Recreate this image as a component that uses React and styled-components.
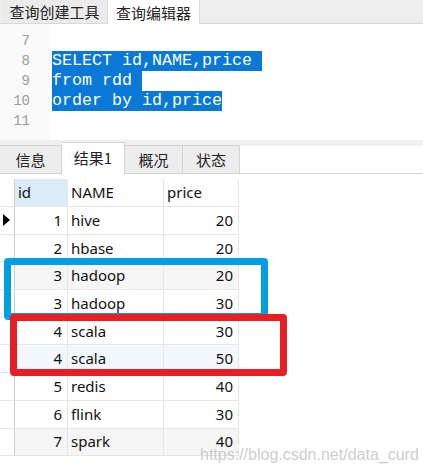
import React from "react";
import styled, { createGlobalStyle } from "styled-components";

const GlobalStyle = createGlobalStyle`
  html, body { margin: 0; padding: 0; background: #ffffff; }
  body { overflow: hidden; font-family: "Noto Sans", "Noto Sans CJK SC", sans-serif; }
`;

const Page = styled.div`
  position: relative;
  width: 423px;
  height: 475px;
  overflow: hidden;
  background: #ffffff;
`;

const TopTabBar = styled.div`
  display: flex;
  height: 23px;
  background: #eeeeee;
  border-bottom: 1px solid #d9d9d9;
  padding-left: 2px;
`;

const TopTab = styled.div`
  display: flex;
  align-items: center;
  justify-content: center;
  width: ${(p) => p.$w}px;
  height: ${(p) => (p.$active ? 24 : 23)}px;
  box-sizing: border-box;
  background: ${(p) => (p.$active ? "#ffffff" : "#ebebeb")};
  border-right: 1px solid #d9d9d9;
  font-family: "Noto Sans CJK SC", sans-serif;
  font-size: 15px;
  color: #222;
  line-height: 1;
`;

const Editor = styled.div`
  display: flex;
  height: 116px;
`;

const Gutter = styled.div`
  width: 50px;
  background: #fafafa;
  padding-top: 7px;
  box-sizing: border-box;
`;

const LineNo = styled.div`
  height: 20px;
  line-height: 20px;
  text-align: right;
  padding-right: 20px;
  font-family: "Liberation Mono", monospace;
  font-size: 14px;
  color: #9a9a9a;
`;

const Code = styled.div`
  flex: 1;
  padding-top: 7px;
  padding-left: 2px;
`;

const CodeLine = styled.div`
  height: 20px;
  line-height: 20px;
  font-family: "Liberation Mono", monospace;
  font-size: 16.67px;
  white-space: pre;
`;

const Sel = styled.span`
  display: inline-block;
  height: 20px;
  background: #0a78d7;
  color: #ffffff;
`;

const TabRow = styled.div`
  display: flex;
  align-items: flex-end;
  height: 34px;
  box-sizing: border-box;
  background: linear-gradient(#f0f0f0 0 6px, #ffffff 6px);
  border-bottom: 1px solid #d4d4d4;
`;

const ResTab = styled.div`
  display: flex;
  align-items: center;
  justify-content: center;
  width: ${(p) => p.$w}px;
  height: ${(p) => (p.$active ? 32 : 28)}px;
  margin-bottom: ${(p) => (p.$active ? -1 : 0)}px;
  box-sizing: border-box;
  background: ${(p) => (p.$active ? "#ffffff" : "#ededed")};
  border-top: 1px solid #d4d4d4;
  border-right: 1px solid #d4d4d4;
  font-family: "Noto Sans CJK SC", sans-serif;
  font-size: 15px;
  color: #222;
  line-height: 1;
  padding-bottom: ${(p) => (p.$active ? 2 : 0)}px;
`;

const GridWrap = styled.div`
  padding-top: 5px;
`;

const Grid = styled.div`
  display: grid;
  grid-template-columns: 15px 53px 96px 75px;
  grid-template-rows: 28px repeat(9, 27.7px);
`;

const Cell = styled.div`
  display: flex;
  align-items: center;
  box-sizing: border-box;
  border-right: 1px solid ${(p) => (p.$ind ? "#cfcfcf" : "#e6e6e6")};
  border-bottom: 1px solid #e6e6e6;
  background: ${(p) => p.$bg || "#ffffff"};
  justify-content: ${(p) => (p.$right ? "flex-end" : "flex-start")};
  padding: ${(p) => (p.$ind ? "0 0 0 3px" : p.$right ? "0 5px 0 0" : "0 0 0 3px")};
  font-family: "Noto Sans", sans-serif;
  font-size: 15px;
  color: #111;
  line-height: 1;
`;

const Arrow = styled.span`
  width: 0;
  height: 0;
  border-top: 6px solid transparent;
  border-bottom: 6px solid transparent;
  border-left: 7px solid #000;
`;

const Frame = styled.div`
  position: absolute;
  left: ${(p) => p.$x}px;
  top: ${(p) => p.$y}px;
  width: ${(p) => p.$w}px;
  height: ${(p) => p.$h}px;
  box-sizing: border-box;
  border: 7px solid ${(p) => p.$color};
  border-radius: 4px;
`;

const Watermark = styled.div`
  position: absolute;
  left: 200px;
  top: 447px;
  font-family: "Liberation Sans", Arial, sans-serif;
  font-size: 16px;
  line-height: 16px;
  color: rgba(170, 170, 170, 0.6);
  white-space: nowrap;
`;

const rows = [
  [1, "hive", 20],
  [2, "hbase", 20],
  [3, "hadoop", 20],
  [3, "hadoop", 30],
  [4, "scala", 30],
  [4, "scala", 50],
  [5, "redis", 40],
  [6, "flink", 30],
  [7, "spark", 40],
];

const rowBg = (i) => (i === 2 || i === 8 ? "#f6f6f6" : i === 5 ? "#f3f8fd" : "#ffffff");

export default function App() {
  return (
    <Page>
      <GlobalStyle />
      <TopTabBar>
        <TopTab $w={106}>查询创建工具</TopTab>
        <TopTab $w={92} $active>
          查询编辑器
        </TopTab>
      </TopTabBar>
      <Editor>
        <Gutter>
          {[7, 8, 9, 10, 11].map((n) => (
            <LineNo key={n}>{n}</LineNo>
          ))}
        </Gutter>
        <Code>
          <CodeLine />
          <CodeLine>
            <Sel>{"SELECT id,NAME,price "}</Sel>
          </CodeLine>
          <CodeLine>
            <Sel>{"from rdd "}</Sel>
          </CodeLine>
          <CodeLine>
            <Sel>{"order by id,price"}</Sel>
          </CodeLine>
          <CodeLine />
        </Code>
      </Editor>
      <TabRow>
        <ResTab $w={62}>信息</ResTab>
        <ResTab $w={63} $active>
          结果1
        </ResTab>
        <ResTab $w={58}>概况</ResTab>
        <ResTab $w={57}>状态</ResTab>
      </TabRow>
      <GridWrap>
        <Grid>
          <Cell $ind />
          <Cell $bg="#dcebf8">id</Cell>
          <Cell>NAME</Cell>
          <Cell>price</Cell>
          {rows.map((r, i) => (
            <React.Fragment key={i}>
              <Cell $ind>{i === 0 ? <Arrow /> : null}</Cell>
              <Cell $right $bg={rowBg(i)}>
                {r[0]}
              </Cell>
              <Cell $bg={rowBg(i)}>{r[1]}</Cell>
              <Cell $right $bg={rowBg(i)}>
                {r[2]}
              </Cell>
            </React.Fragment>
          ))}
        </Grid>
      </GridWrap>
      <Frame $x={4} $y={258} $w={264} $h={62} $color="#009fe3" />
      <Frame $x={10} $y={314} $w={277} $h={62} $color="#e81e27" />
      <Watermark>https://blog.csdn.net/data_curd</Watermark>
    </Page>
  );
}
